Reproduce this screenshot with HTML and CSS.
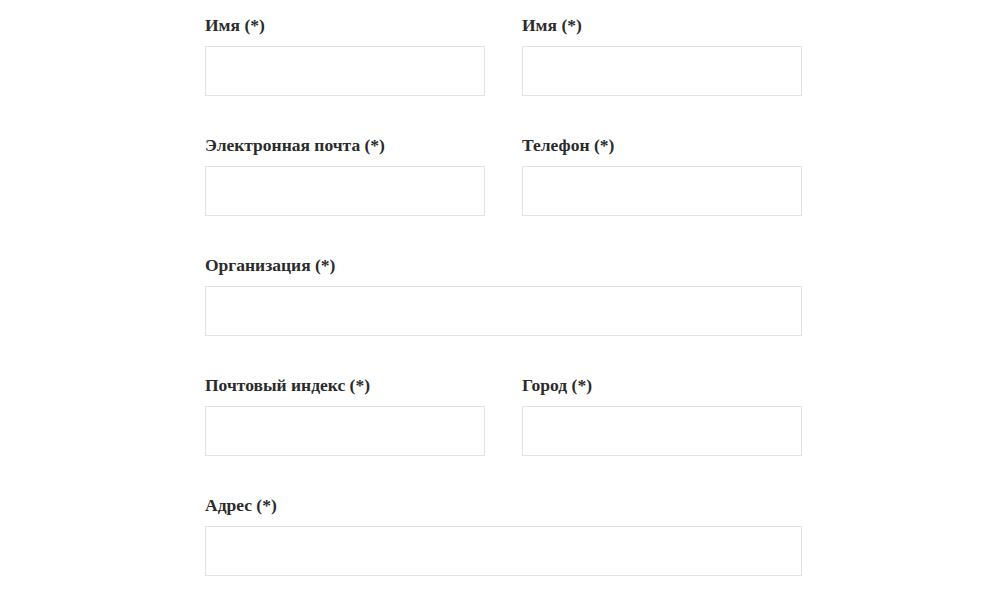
FILE: index.html
```html
<!DOCTYPE html>
<html lang="ru">
<head>
<meta charset="utf-8">
<title>Форма</title>
<link rel="stylesheet" href="styles.css">
</head>
<body>
<form class="form">
  <div class="row">
    <div class="field"><label class="label">Имя (*)</label><input class="input" type="text"></div>
    <div class="field"><label class="label">Имя (*)</label><input class="input" type="text"></div>
  </div>
  <div class="row">
    <div class="field"><label class="label">Электронная почта (*)</label><input class="input" type="text"></div>
    <div class="field"><label class="label">Телефон (*)</label><input class="input" type="text"></div>
  </div>
  <div class="row">
    <div class="field full"><label class="label">Организация (*)</label><input class="input" type="text"></div>
  </div>
  <div class="row">
    <div class="field"><label class="label">Почтовый индекс (*)</label><input class="input" type="text"></div>
    <div class="field"><label class="label">Город (*)</label><input class="input" type="text"></div>
  </div>
  <div class="row">
    <div class="field full"><label class="label">Адрес (*)</label><input class="input" type="text"></div>
  </div>
</form>
</body>
</html>
```
FILE: styles.css
```css
html, body {
  margin: 0;
  padding: 0;
  background: #fff;
}
body {
  font-family: "Liberation Serif", "Times New Roman", serif;
  color: #333;
}
.form {
  width: 597px;
  margin-left: 205px;
  padding-top: 15px;
}
.row {
  display: flex;
  gap: 37px;
  margin-bottom: 39px;
}
.field {
  display: flex;
  flex-direction: column;
  width: 280px;
}
.field.full {
  width: 597px;
}
.label {
  font-size: 17.5px;
  font-weight: bold;
  line-height: 20px;
  height: 20px;
  margin-bottom: 11px;
  color: #2b2b2b;
}
.input {
  box-sizing: border-box;
  height: 50px;
  width: 100%;
  border: 1px solid #e3e3e3;
  background: #fff;
  margin: 0;
  padding: 0 10px;
  outline: none;
}
```
